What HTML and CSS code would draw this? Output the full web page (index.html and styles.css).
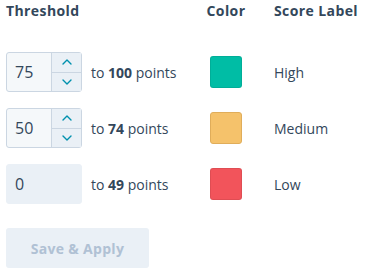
FILE: index.html
```html
<!DOCTYPE html>
<html lang="en">
<head>
  <meta charset="UTF-8">
  <meta name="viewport" content="width=device-width, initial-scale=1.0">
  <title>Score thresholds</title>
  <link rel="stylesheet" href="styles.css">
</head>
<body>
  <div class="panel">
    <div class="grid">
      <div class="head">Threshold</div>
      <div class="head center">Color</div>
      <div class="head">Score Label</div>

      <div class="range">
        <div class="num">
          <span class="num-value">75</span>
          <span class="spin">
            <span class="spin-btn">
              <svg width="10" height="6" viewBox="0 0 10 6"><path d="M1 5 L5 1 L9 5" fill="none" stroke="#0091ae" stroke-width="1.4" stroke-linecap="round" stroke-linejoin="round"/></svg>
            </span>
            <span class="spin-btn">
              <svg width="10" height="6" viewBox="0 0 10 6"><path d="M1 1 L5 5 L9 1" fill="none" stroke="#0091ae" stroke-width="1.4" stroke-linecap="round" stroke-linejoin="round"/></svg>
            </span>
          </span>
        </div>
        <span class="to">to <strong>100</strong> points</span>
      </div>
      <div class="center"><span class="swatch teal"></span></div>
      <div class="label">High</div>

      <div class="range">
        <div class="num">
          <span class="num-value">50</span>
          <span class="spin">
            <span class="spin-btn">
              <svg width="10" height="6" viewBox="0 0 10 6"><path d="M1 5 L5 1 L9 5" fill="none" stroke="#0091ae" stroke-width="1.4" stroke-linecap="round" stroke-linejoin="round"/></svg>
            </span>
            <span class="spin-btn">
              <svg width="10" height="6" viewBox="0 0 10 6"><path d="M1 1 L5 5 L9 1" fill="none" stroke="#0091ae" stroke-width="1.4" stroke-linecap="round" stroke-linejoin="round"/></svg>
            </span>
          </span>
        </div>
        <span class="to">to <strong>74</strong> points</span>
      </div>
      <div class="center"><span class="swatch orange"></span></div>
      <div class="label">Medium</div>

      <div class="range">
        <div class="num disabled">
          <span class="num-value">0</span>
        </div>
        <span class="to">to <strong>49</strong> points</span>
      </div>
      <div class="center"><span class="swatch red"></span></div>
      <div class="label">Low</div>
    </div>

    <button class="save" disabled>Save &amp; Apply</button>
  </div>
</body>
</html>
```

FILE: styles.css
```css
* {
  margin: 0;
  padding: 0;
  box-sizing: border-box;
}

body {
  font-family: "Open Sans", "Lato", sans-serif;
  color: #33475b;
  background: #fff;
}

.panel {
  padding: 0 6px;
}

.grid {
  display: grid;
  grid-template-columns: 172px 60px auto;
  grid-template-rows: 36px repeat(3, 40px);
  column-gap: 18px;
  row-gap: 16px;
  align-items: center;
}

.head {
  font-size: 14px;
  font-weight: 700;
  line-height: 22px;
  letter-spacing: 0.4px;
  align-self: start;
}

.center {
  display: flex;
  justify-content: center;
}

.range {
  display: flex;
  align-items: center;
  gap: 9px;
}

.num {
  width: 76px;
  height: 40px;
  display: flex;
  background: #f5f8fa;
  border: 1px solid #cbd6e2;
  border-radius: 3px;
}

.num.disabled {
  background: #eaf0f6;
  border-color: #eaf0f6;
}

.num-value {
  flex: 1;
  display: flex;
  align-items: center;
  padding-left: 8px;
  font-size: 16px;
}

.spin {
  width: 30px;
  display: flex;
  flex-direction: column;
  border-left: 1px solid #cbd6e2;
  background: #eaf0f6;
}

.spin-btn {
  flex: 1;
  display: flex;
  align-items: center;
  justify-content: center;
}

.spin-btn + .spin-btn {
  border-top: 1px solid #cbd6e2;
}

.to {
  font-size: 14px;
}

.to strong {
  font-weight: 700;
}

.swatch {
  width: 32px;
  height: 32px;
  border-radius: 3px;
  border: 1px solid rgba(0, 0, 0, 0.08);
}

.teal { background: #00bda5; }
.orange { background: #f5c26b; border-color: #e0ad5a; }
.red { background: #f2545b; }

.label {
  font-size: 14px;
}

.save {
  margin-top: 24px;
  width: 143px;
  height: 40px;
  border: none;
  border-radius: 3px;
  background: #eaf0f6;
  color: #b0c1d4;
  font-family: inherit;
  font-size: 14px;
  font-weight: 700;
  letter-spacing: 0.3px;
}
```
